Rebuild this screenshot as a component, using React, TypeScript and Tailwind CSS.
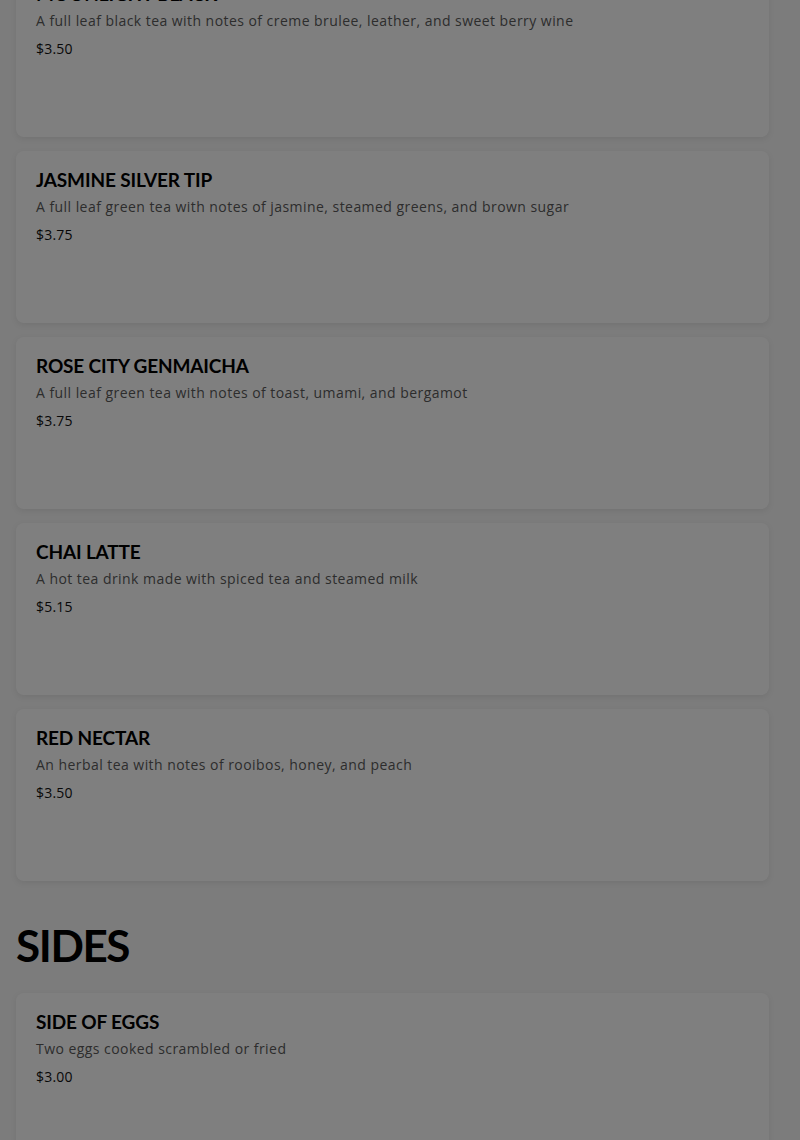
import React from "react";

interface MenuItem {
  name: string;
  description: string;
  price: string;
}

const drinks: MenuItem[] = [
  { name: "MOONLIGHT BLACK", description: "A full leaf black tea with notes of creme brulee, leather, and sweet berry wine", price: "$3.50" },
  { name: "JASMINE SILVER TIP", description: "A full leaf green tea with notes of jasmine, steamed greens, and brown sugar", price: "$3.75" },
  { name: "ROSE CITY GENMAICHA", description: "A full leaf green tea with notes of toast, umami, and bergamot", price: "$3.75" },
  { name: "CHAI LATTE", description: "A hot tea drink made with spiced tea and steamed milk", price: "$5.15" },
  { name: "RED NECTAR", description: "An herbal tea with notes of rooibos, honey, and peach", price: "$3.50" },
];

const sides: MenuItem[] = [
  { name: "SIDE OF EGGS", description: "Two eggs cooked scrambled or fried", price: "$3.00" },
];

const titleFont = { fontFamily: "Lato, 'Open Sans', sans-serif" };
const bodyFont = { fontFamily: "'Open Sans', 'Noto Sans', sans-serif" };

const MenuCard = ({ item }: { item: MenuItem }) => (
  <div className="h-[172px] rounded-lg bg-white px-5 pt-[17px] shadow-[0_2px_6px_rgba(0,0,0,0.08)]">
    <h3 className="text-[19px] leading-6 font-bold tracking-[-0.15px] text-black" style={titleFont}>
      {item.name}
    </h3>
    <p className="mt-[5px] text-[14px] leading-5 tracking-[0.45px] text-[#5a5a5a]" style={bodyFont}>
      {item.description}
    </p>
    <p className="mt-[8px] text-[14px] leading-5 tracking-[0.2px] text-[#111]" style={bodyFont}>
      {item.price}
    </p>
  </div>
);

export default function App() {
  return (
    <div className="relative h-[1140px] w-[800px] overflow-hidden bg-[#f8f8f8]">
      <div className="-mt-[35px] ml-4 mr-[31px] flex flex-col">
        <div className="flex flex-col gap-[14px]">
          {drinks.map((item) => (
            <MenuCard key={item.name} item={item} />
          ))}
        </div>
        <h2 className="mt-[42px] mb-[26px] text-[44px] leading-[44px] font-bold tracking-[-1.4px] text-black" style={titleFont}>
          SIDES
        </h2>
        <div className="flex flex-col gap-[14px]">
          {sides.map((item) => (
            <MenuCard key={item.name} item={item} />
          ))}
        </div>
      </div>
      <div className="fixed inset-0 bg-black/50" />
    </div>
  );
}
